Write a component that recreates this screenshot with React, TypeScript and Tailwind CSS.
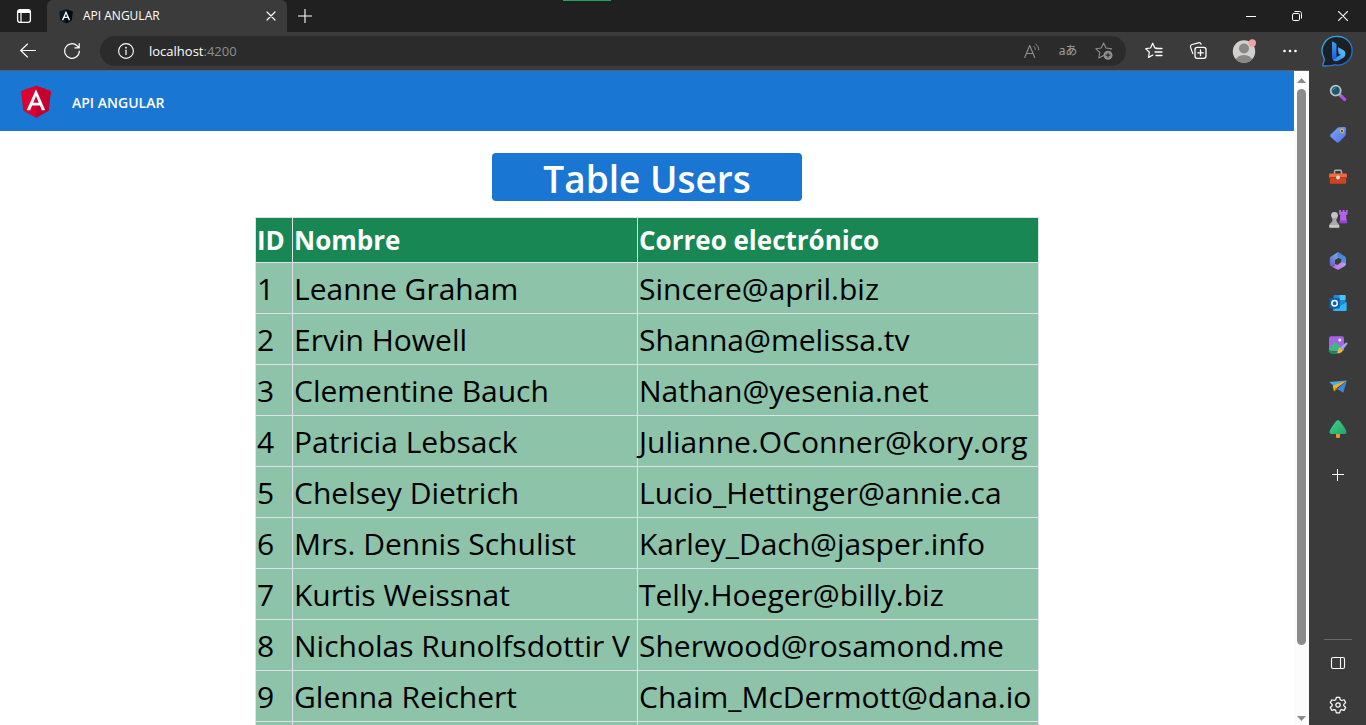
import React from "react";

const users = [
  { id: 1, name: "Leanne Graham", email: "Sincere@april.biz" },
  { id: 2, name: "Ervin Howell", email: "Shanna@melissa.tv" },
  { id: 3, name: "Clementine Bauch", email: "Nathan@yesenia.net" },
  { id: 4, name: "Patricia Lebsack", email: "Julianne.OConner@kory.org" },
  { id: 5, name: "Chelsey Dietrich", email: "Lucio_Hettinger@annie.ca" },
  { id: 6, name: "Mrs. Dennis Schulist", email: "Karley_Dach@jasper.info" },
  { id: 7, name: "Kurtis Weissnat", email: "Telly.Hoeger@billy.biz" },
  { id: 8, name: "Nicholas Runolfsdottir V", email: "Sherwood@rosamond.me" },
  { id: 9, name: "Glenna Reichert", email: "Chaim_McDermott@dana.io" },
];

const line = {
  fill: "none",
  stroke: "currentColor",
  strokeLinecap: "round",
  strokeLinejoin: "round",
} as const;

function AngularShield({ className, left, right }: { className: string; left: string; right: string }) {
  return (
    <svg className={className} viewBox="0 0 250 250" aria-hidden="true">
      <path fill={left} d="M125 30 31.900 63.200 46.100 186.300 125 230 203.900 186.300 218.100 63.200z" />
      <path fill={right} d="M125 30v22.200V230l78.900-43.700 14.200-123.100z" />
      <path
        fill="#fff"
        d="M125 52.100 66.800 182.600h21.700l11.700-29.200h49.400l11.700 29.200H183zm17 83.300h-34l17-40.900z"
      />
    </svg>
  );
}

function TabActionsIcon() {
  return (
    <svg className="size-4" viewBox="0 0 16 16" aria-hidden="true">
      <rect x="1.600" y="1.600" width="12.800" height="12.800" rx="2.300" {...line} strokeWidth="1.300" />
      <path d="M2 3.500C2 2.500 3 2 4 2h8c1 0 2 .5 2 1.500V5H2z" fill="currentColor" />
      <path d="M5 5v9" {...line} strokeWidth="1.200" />
    </svg>
  );
}

function BackIcon() {
  return (
    <svg className="size-4" viewBox="0 0 16 16" aria-hidden="true">
      <path d="M15.500 7.500H.7M7.500 1 .7 7.500 7.500 14" {...line} strokeWidth="1.100" />
    </svg>
  );
}

function ReloadIcon() {
  return (
    <svg className="size-4" viewBox="0 0 16 16" aria-hidden="true">
      <path d="M15.300 8A7.300 7.300 0 1 1 13 2.700L15 4.800M15.200 .6v4.300h-4.300" {...line} strokeWidth="1.200" />
    </svg>
  );
}

function InfoIcon() {
  return (
    <svg className="size-4" viewBox="0 0 16 16" aria-hidden="true">
      <circle cx="8" cy="8" r="7.400" {...line} strokeWidth="1.100" />
      <path d="M8 7.200v4.200" {...line} strokeWidth="1.200" />
      <circle cx="8" cy="4.700" r=".9" fill="currentColor" />
    </svg>
  );
}

function ReadAloudIcon() {
  return (
    <svg className="size-4" viewBox="0 0 16 16" aria-hidden="true">
      <path d="M.7 14.500 5.700 2.500l5 12M2.400 10.500h6.600" {...line} strokeWidth="1.100" />
      <path d="M9.800 3.200c1 .9 1.500 2 1.500 3.300M11.800 1.200c1.900 1.400 3 3.300 3 5.600" {...line} strokeWidth="1" />
    </svg>
  );
}

function AddFavoriteIcon() {
  return (
    <svg className="h-[18px] w-[18px]" viewBox="0 0 18 18" aria-hidden="true">
      <path
        d="M15.800 7.500 16.500 6.700 11 6 8.600 1 6.200 6 .8 6.700l4 3.800-1 5.500 4.800-2.600"
        {...line}
        strokeWidth="1.100"
      />
      <circle cx="13" cy="13.200" r="4.500" fill="currentColor" />
      <path d="M13 10.800v4.800M10.600 13.200h4.800" stroke="#2b2b2b" strokeWidth="1.200" />
    </svg>
  );
}

function FavoritesIcon() {
  return (
    <svg className="h-[18px] w-[18px]" viewBox="0 0 18 18" aria-hidden="true">
      <path d="M11.600 6.200 9.800 6 7.700 1.200 5.500 6 .8 6.700l3.600 3.500-.9 5.200 4.400-2.400" {...line} strokeWidth="1.200" />
      <path d="M11 6.500h6M10 10h7M11 13.500h6" {...line} strokeWidth="1.300" />
    </svg>
  );
}

function CollectionsIcon() {
  return (
    <svg className="h-[18px] w-[18px]" viewBox="0 0 18 18" aria-hidden="true">
      <path d="M3.800 11.600 1.600 5.400C1.200 4 1.700 3 3 2.500l6.500-1.700c1.200-.3 2.200.2 2.600 1.500" {...line} strokeWidth="1.200" />
      <rect x="6" y="5.300" width="11" height="11" rx="2.200" {...line} strokeWidth="1.300" />
      <path d="M11.500 8v5.600M8.700 10.800h5.600" {...line} strokeWidth="1.300" />
    </svg>
  );
}

function ProfileIcon() {
  return (
    <svg className="size-6" viewBox="0 0 24 24" aria-hidden="true">
      <defs>
        <clipPath id="avatar">
          <circle cx="12" cy="12.500" r="11.200" />
        </clipPath>
      </defs>
      <circle cx="12" cy="12.500" r="11.200" fill="#d2d0ce" />
      <g clipPath="url(#avatar)" fill="#8a8886">
        <circle cx="12" cy="9.500" r="5" />
        <ellipse cx="12" cy="22" rx="8.500" ry="6" />
      </g>
      <circle cx="20.300" cy="4" r="3.700" fill="#f1a3a3" />
    </svg>
  );
}

function BingIcon() {
  return (
    <svg className="size-8" viewBox="0 0 32 32" aria-hidden="true">
      <defs>
        <linearGradient id="bubble" x1="0" y1="0" x2="1" y2="1">
          <stop offset="0" stopColor="#38b9dc" />
          <stop offset="1" stopColor="#2257d6" />
        </linearGradient>
        <linearGradient id="stem" x1="0" y1="0" x2="0" y2="1">
          <stop offset="0" stopColor="#3fa0f5" />
          <stop offset="1" stopColor="#1f5fe0" />
        </linearGradient>
        <linearGradient id="bowl" x1="1" y1="0" x2="0" y2="1">
          <stop offset="0" stopColor="#5fd0f2" />
          <stop offset="1" stopColor="#2a7cf0" />
        </linearGradient>
      </defs>
      <path
        d="M16.500 1.500a14.300 14.300 0 1 1-2 28.400c-2-.3-3 .5-5 .8l-7 .3c-.8 0-1-.7-.7-1.300l1.400-4c.4-1.200 0-2-.4-3.200A14.300 14.300 0 0 1 16.500 1.500z"
        fill="#1c2024"
        stroke="url(#bubble)"
        strokeWidth="1.300"
      />
      <path
        d="m17 12.200 4.700 2.600c1.800 1 2.800 2.500 2.700 4.300 0 1.500-.8 2.800-2 3.600l-5.600 3.200c-2.300 1.200-5.300 0-5.300-3.200 1 .8 2 .7 3.100.1l5-3.100-1.300-.8c-.5-.3-.8-.7-1-1.200z"
        fill="url(#bowl)"
      />
      <path d="m11 6.300 3.500 1.900c.7.400 1 .9 1 1.700v11.600c0 1.600-1 2.600-2.300 2.600S11 23.300 11 21.700z" fill="url(#stem)" />
    </svg>
  );
}

function SearchIcon() {
  return (
    <svg className="size-[18px]" viewBox="0 0 18 18" aria-hidden="true">
      <path d="m11.500 11.500 4.200 4" stroke="#b44be8" strokeWidth="3.200" strokeLinecap="round" />
      <path d="m10.300 10.300 2 2" stroke="#8b9298" strokeWidth="2" />
      <circle cx="6.700" cy="6.600" r="5" fill="#19586f" stroke="#b9c0c5" strokeWidth="1.900" />
      <path d="M4 6.600a2.800 2.800 0 0 1 2.800-2.700" fill="none" stroke="#3fa0bd" strokeWidth="1" />
    </svg>
  );
}

function ShoppingIcon() {
  return (
    <svg className="size-[18px]" viewBox="0 0 18 18" aria-hidden="true">
      <defs>
        <linearGradient id="tag" x1="0" y1="0" x2="1" y2="1">
          <stop offset="0" stopColor="#7faaf8" />
          <stop offset="1" stopColor="#4f6fe6" />
        </linearGradient>
      </defs>
      <path
        d="M10 1.300 15.500.9c.9 0 1.500.6 1.500 1.500l-.2 6c0 .6-.3 1-.7 1.500l-6 6.200c-.9.900-1.900.9-2.800 0l-5.500-5c-.9-.9-.9-2 0-2.900l6.700-6.300c.4-.4.900-.6 1.500-.6z"
        fill="url(#tag)"
      />
      <circle cx="13" cy="5" r="1.600" fill="#303030" stroke="#e8c341" strokeWidth="1.100" />
    </svg>
  );
}

function ToolsIcon() {
  return (
    <svg className="size-[18px]" viewBox="0 0 18 18" aria-hidden="true">
      <path d="M5.500 6V3.400c0-.7.400-1.200 1.200-1.200h4.600c.8 0 1.200.5 1.200 1.200V6" fill="none" stroke="#aeb3b7" strokeWidth="1.400" />
      <path d="M1.200 5.500h15.600c.7 0 1.100.5 1.100 1.100v3.200H.1V6.600c0-.6.4-1.100 1.100-1.100z" fill="#ef6a3c" />
      <path d="M.8 9.800h16.400v4.600c0 .8-.5 1.300-1.300 1.300H2.100c-.8 0-1.300-.5-1.300-1.300z" fill="#cf4420" />
      <path d="M.5 9.500h17" stroke="#a7351b" strokeWidth=".8" />
      <circle cx="9" cy="9.500" r="1.900" fill="#d9dcdf" />
    </svg>
  );
}

function GamesIcon() {
  return (
    <svg className="h-[18px] w-5" viewBox="0 0 20 18" aria-hidden="true">
      <path d="M11 0h2v1.700h1.500V0h2v1.700H18V0h1.600v4l-1.500 1.200.6 7h-6.700l.3-7L11 4z" fill="#b660ef" />
      <path d="M11.500 10.500h7.700v2.800h-7.700z" fill="#9344d6" />
      <circle cx="6.500" cy="5.300" r="3.400" fill="#c3c3c3" />
      <path d="M3.200 8.300h6.600l-1.500 1.300c.2 2 .8 3.300 2.600 4.600v3.300H1.600v-3.300c1.800-1.300 2.800-2.600 3-4.600z" fill="#aaa9a8" />
      <path d="M1.300 15h10v2.700h-10z" fill="#c9c8c7" />
    </svg>
  );
}

function Microsoft365Icon() {
  return (
    <svg className="size-[18px]" viewBox="0 0 18 18" aria-hidden="true">
      <defs>
        <linearGradient id="m365a" x1="1" y1="0" x2="0" y2="1">
          <stop offset="0" stopColor="#7cc0ee" />
          <stop offset="1" stopColor="#6a5ac6" />
        </linearGradient>
        <linearGradient id="m365b" x1="0" y1="0" x2="1" y2="0">
          <stop offset="0" stopColor="#a873d8" />
          <stop offset="1" stopColor="#c99af0" />
        </linearGradient>
        <linearGradient id="m365c" x1="0" y1="0" x2="0" y2="1">
          <stop offset="0" stopColor="#3f7fd6" />
          <stop offset="1" stopColor="#5a9be8" />
        </linearGradient>
      </defs>
      <path d="M8.500.6 2.700 4C1.400 4.800.8 5.700.8 7v5c0 1.200.6 2 1.700 2.600L6 12.400V8l6.500-4-2.400-3.200C9.600.4 9 .3 8.500.6z" fill="url(#m365a)" />
      <path d="M10 .6 15.300 4C16.500 4.800 17 5.700 17 7v5l-1 1.700-4-3.100.5-3.100-4-2.400c-.8-2 0-4 1.500-4.500z" fill="url(#m365c)" />
      <path d="m12.200 10.300 4.700 1.500c-.1 1.200-.7 2-1.800 2.700l-4.300 2.600c-1.200.7-2.400.7-3.600 0l-4.800-2.500c1.700 0 3.200-.8 3.600-2.600l2.300 1z" fill="url(#m365b)" />
    </svg>
  );
}

function OutlookIcon() {
  return (
    <svg className="size-[18px]" viewBox="0 0 18 18" aria-hidden="true">
      <rect x="4.500" y="1" width="12" height="9" rx="1" fill="#2388d6" />
      <path d="M10.500 1h5c.6 0 1 .4 1 1v4h-6z" fill="#4cc3f5" />
      <path d="M4 8h13.500v8c0 .6-.4 1-1 1H5c-.6 0-1-.4-1-1z" fill="#178ad9" />
      <path d="m4.200 16.300 13.300-8v8.200l-.8.500H5z" fill="#35b5ee" />
      <rect x=".4" y="4" width="10.400" height="10.400" rx="1.200" fill="#0762b5" />
      <circle cx="5.600" cy="9.200" r="2.700" fill="none" stroke="#fff" strokeWidth="1.500" />
    </svg>
  );
}

function ImageCreatorIcon() {
  return (
    <svg className="h-[18px] w-5" viewBox="0 0 20 18" aria-hidden="true">
      <rect x="1" y=".3" width="15" height="15" rx="2" fill="#a562e5" />
      <circle cx="11.800" cy="4" r="1.500" fill="#f4e9ff" />
      <path d="m1 12 5-5c.9-.9 1.800-.9 2.700 0L15 13l-1 2.300H2.500C1.500 15.300 1 14.500 1 13.500z" fill="#3fb886" />
      <path d="M1 14.500c3 3.600 6 3.200 9 1.500" fill="none" stroke="#1e8c63" strokeWidth="2" />
      <path d="m12.200 11.600 5.700-5c.9-.6 2 .4 1.500 1.400l-4.700 6z" fill="#a9a2e3" />
      <path d="m11.800 11.400 3 2.800c-.8 2.600-3.200 3.300-6.100 3 1.500-1.700 1-4.300 3.100-5.800z" fill="#f1b73c" />
    </svg>
  );
}

function DropIcon() {
  return (
    <svg className="size-[18px]" viewBox="0 0 18 18" aria-hidden="true">
      <path d="M.2 4 17.800 2.500 5 8.300z" fill="#4dabdf" />
      <path d="m17.800 2.500-3.500 12.200-6-3.600z" fill="#3d85e0" />
      <path d="M17.800 2.500 3.700 7.700 5 13.500l2.200-3z" fill="#f0b429" />
      <path d="m5 13.500 3.600-2.600L6.800 9.600z" fill="#b87917" />
    </svg>
  );
}

function TreeIcon() {
  return (
    <svg className="size-[18px]" viewBox="0 0 18 18" aria-hidden="true">
      <defs>
        <linearGradient id="leaf" x1="0" y1="0" x2="1" y2="1">
          <stop offset="0" stopColor="#45cf8c" />
          <stop offset="1" stopColor="#20a765" />
        </linearGradient>
      </defs>
      <rect x="7" y="12" width="4" height="6" rx="1" fill="#e19b2d" />
      <path
        d="M9 .2c1 0 1.800.6 2.400 1.500 1 1.600 2.400 3.300 3.600 5 1.300 2 2.200 3.500 2.400 5 .2 1.400-.7 2.300-2 2.300H2.600c-1.300 0-2.200-.9-2-2.300.2-1.500 1.100-3 2.400-5 1.200-1.700 2.600-3.400 3.600-5C7.200.8 8 .2 9 .2z"
        fill="url(#leaf)"
      />
    </svg>
  );
}

function SidebarIcon() {
  return (
    <svg className="size-4" viewBox="0 0 16 16" aria-hidden="true">
      <rect x="1.500" y="2.500" width="13" height="11" rx="1.600" {...line} strokeWidth="1.100" />
      <path d="M10.500 2.500v11" {...line} strokeWidth="1.100" />
    </svg>
  );
}

function SettingsIcon() {
  return (
    <svg className="size-[18px]" viewBox="0 0 18 18" aria-hidden="true">
      <path
        d="M7.300 1.300h3.400l.6 2.500 1.300.7 2.500-.8 1.600 2.900-1.900 1.800v1.300l1.900 1.800-1.600 2.900-2.500-.8-1.300.7-.6 2.500H7.300l-.6-2.500-1.300-.7-2.500.8-1.600-2.900 1.900-1.800V8.400L1.300 6.600l1.600-2.900 2.500.8 1.300-.7z"
        {...line}
        strokeWidth="1.200"
      />
      <circle cx="9" cy="9" r="2.200" {...line} strokeWidth="1.200" />
    </svg>
  );
}

const sidebarApps = [
  { label: "Search", icon: <SearchIcon /> },
  { label: "Shopping", icon: <ShoppingIcon /> },
  { label: "Tools", icon: <ToolsIcon /> },
  { label: "Games", icon: <GamesIcon /> },
  { label: "Microsoft 365", icon: <Microsoft365Icon /> },
  { label: "Outlook", icon: <OutlookIcon /> },
  { label: "Image Creator", icon: <ImageCreatorIcon /> },
  { label: "Drop", icon: <DropIcon /> },
  { label: "E-tree", icon: <TreeIcon /> },
];

function IconButton({ label, className, children }: { label: string; className: string; children: React.ReactNode }) {
  return (
    <button type="button" aria-label={label} className={`flex shrink-0 items-center justify-center ${className}`}>
      {children}
    </button>
  );
}

function TitleBar() {
  return (
    <div className="relative flex h-8 shrink-0 items-stretch bg-[#202020]">
      <div className="absolute left-[563px] top-0 h-px w-12 bg-[#1fa463]" />
      <IconButton label="Tab actions" className="w-[47px]">
        <TabActionsIcon />
      </IconButton>
      <div className="flex w-60 items-center rounded-t-md bg-[#3b3b3b] pl-[10px] pr-2">
        <AngularShield className="size-[18px]" left="#0d1a26" right="#050b12" />
        <span className="ml-2 flex-1 text-[12px]">API ANGULAR</span>
        <IconButton label="Close tab" className="size-4">
          <svg className="size-[10px]" viewBox="0 0 10 10" aria-hidden="true">
            <path d="m1 1 8 8M9 1 1 9" {...line} strokeWidth="1.200" />
          </svg>
        </IconButton>
      </div>
      <IconButton label="New tab" className="w-9">
        <svg className="size-[14px]" viewBox="0 0 14 14" aria-hidden="true">
          <path d="M7 0v14M0 7h14" {...line} strokeWidth="1.100" />
        </svg>
      </IconButton>
      <div className="ml-auto flex">
        <IconButton label="Minimize" className="w-[46px]">
          <svg className="size-[10px]" viewBox="0 0 10 10" aria-hidden="true">
            <path d="M0 5.500h10" {...line} strokeWidth="1" />
          </svg>
        </IconButton>
        <IconButton label="Restore" className="w-[46px]">
          <svg className="size-[10px]" viewBox="0 0 10 10" aria-hidden="true">
            <rect x=".5" y="2.500" width="7" height="7" rx="1.300" {...line} strokeWidth="1" />
            <path d="M2.800.5h4.700c1.200 0 2 .8 2 2v4.700" {...line} strokeWidth="1" />
          </svg>
        </IconButton>
        <IconButton label="Close window" className="w-[46px]">
          <svg className="size-[10px]" viewBox="0 0 10 10" aria-hidden="true">
            <path d="m.3.3 9.400 9.400M9.700.3.300 9.700" {...line} strokeWidth="1.100" />
          </svg>
        </IconButton>
      </div>
    </div>
  );
}

function Toolbar() {
  return (
    <div className="flex h-[38px] shrink-0 items-center bg-[#3b3b3b]">
      <IconButton label="Back" className="ml-1.5 w-11">
        <BackIcon />
      </IconButton>
      <IconButton label="Reload" className="w-11">
        <ReloadIcon />
      </IconButton>
      <div className="ml-1.5 flex h-[30px] flex-1 items-center rounded-full bg-[#2b2b2b] pl-[18px] pr-1 text-[#8f8f8f]">
        <span className="text-white">
          <InfoIcon />
        </span>
        <a href="#" className="ml-[15px] flex-1 pt-px text-[13px] text-[#8f8f8f]">
          <span className="text-white">localhost</span>:4200
        </a>
        <IconButton label="Read aloud" className="w-9">
          <ReadAloudIcon />
        </IconButton>
        <button type="button" className="w-9 font-['Noto_Sans','Noto_Sans_CJK_JP',sans-serif] text-[12px] leading-4 text-[#a0a0a0]">
          aあ
        </button>
        <IconButton label="Add to favorites" className="w-9">
          <AddFavoriteIcon />
        </IconButton>
      </div>
      <div className="flex items-center pl-[6px]">
        <IconButton label="Favorites" className="w-11">
          <FavoritesIcon />
        </IconButton>
        <IconButton label="Collections" className="w-11">
          <CollectionsIcon />
        </IconButton>
        <IconButton label="Profile" className="w-12">
          <ProfileIcon />
        </IconButton>
        <IconButton label="More" className="w-11">
          <svg className="h-1 w-[14px]" viewBox="0 0 14 4" fill="currentColor" aria-hidden="true">
            <circle cx="1.500" cy="2" r="1.300" />
            <circle cx="7" cy="2" r="1.300" />
            <circle cx="12.500" cy="2" r="1.300" />
          </svg>
        </IconButton>
        <IconButton label="Bing chat" className="mr-1 w-[50px]">
          <BingIcon />
        </IconButton>
      </div>
    </div>
  );
}

function Sidebar() {
  return (
    <aside className="flex w-[57px] shrink-0 flex-col items-center bg-[#3b3b3b] pt-[2px]">
      {sidebarApps.map((app) => (
        <IconButton key={app.label} label={app.label} className="h-[42px] w-full">
          {app.icon}
        </IconButton>
      ))}
      <IconButton label="Customize" className="mt-1 h-[42px] w-full">
        <svg className="size-3" viewBox="0 0 12 12" aria-hidden="true">
          <path d="M5.500 0v12M0 5.500h12" {...line} strokeWidth="1" />
        </svg>
      </IconButton>
      <div className="mt-auto w-7 border-t border-[#6a6a6a]" />
      <IconButton label="Hide sidebar" className="mt-[2px] h-[42px] w-full">
        <SidebarIcon />
      </IconButton>
      <IconButton label="Settings" className="h-[41px] w-full">
        <SettingsIcon />
      </IconButton>
    </aside>
  );
}

function ScrollBar() {
  return (
    <div className="flex w-[15px] shrink-0 flex-col items-center justify-between bg-[#fcfcfc] pb-1 pt-[7px]" aria-hidden="true">
      <svg className="h-[5px] w-[9px]" viewBox="0 0 9 5">
        <path d="M4.500 0 9 5H0z" fill="#8b8b8b" />
      </svg>
      <div className="mb-[71px] mt-[6px] w-[9px] flex-1 rounded-full bg-[#8b8b8b]" />
      <svg className="h-[5px] w-[9px]" viewBox="0 0 9 5">
        <path d="M4.500 5 0 0h9z" fill="#8b8b8b" />
      </svg>
    </div>
  );
}

function UsersPage() {
  return (
    <div className="min-w-0 flex-1 overflow-hidden bg-white">
      <header className="flex h-[60px] items-center bg-[#1976d2] text-white">
        <AngularShield className="ml-4 size-10" left="#dd0031" right="#c3002f" />
        <span className="ml-4 pt-[2px] text-[14px] font-semibold">API ANGULAR</span>
      </header>
      <main className="flex flex-col items-center pt-[22px]">
        <h1 className="flex h-12 w-[310px] items-center justify-center rounded bg-[#1976d2] pt-[2px] text-[37px] font-semibold leading-none text-white">
          Table Users
        </h1>
        <table className="mt-4 table-fixed border-collapse border border-[#dee2e6] text-left text-[30px] leading-[48px] text-black">
          <colgroup>
            <col className="w-[37px]" />
            <col className="w-[345px]" />
            <col className="w-[401px]" />
          </colgroup>
          <thead>
            <tr className="bg-[#198754] text-[26px] leading-[44px] text-white">
              {["ID", "Nombre", "Correo electrónico"].map((title) => (
                <th key={title} scope="col" className="border border-[#dee2e6] px-px py-0 font-bold">
                  {title}
                </th>
              ))}
            </tr>
          </thead>
          <tbody>
            {users.map((user) => (
              <tr key={user.id} className="whitespace-nowrap bg-[#8cc3a9]">
                <td className="border border-[#dee2e6] px-px pb-0 pt-[2px]">{user.id}</td>
                <td className="border border-[#dee2e6] px-px pb-0 pt-[2px]">{user.name}</td>
                <td className="border border-[#dee2e6] px-px pb-0 pt-[2px]">{user.email}</td>
              </tr>
            ))}
            <tr className="h-[51px] bg-[#8cc3a9]">
              <td className="border border-[#dee2e6]" />
              <td className="border border-[#dee2e6]" />
              <td className="border border-[#dee2e6]" />
            </tr>
          </tbody>
        </table>
      </main>
    </div>
  );
}

export default function App() {
  return (
    <div className="flex h-screen flex-col overflow-hidden bg-[#3b3b3b] font-['Open_Sans','Noto_Sans',sans-serif] text-white">
      <TitleBar />
      <Toolbar />
      <div className="flex min-h-0 flex-1">
        <div className="flex min-w-0 flex-1 border-t border-[#55626e]">
          <UsersPage />
          <ScrollBar />
        </div>
        <Sidebar />
      </div>
    </div>
  );
}
